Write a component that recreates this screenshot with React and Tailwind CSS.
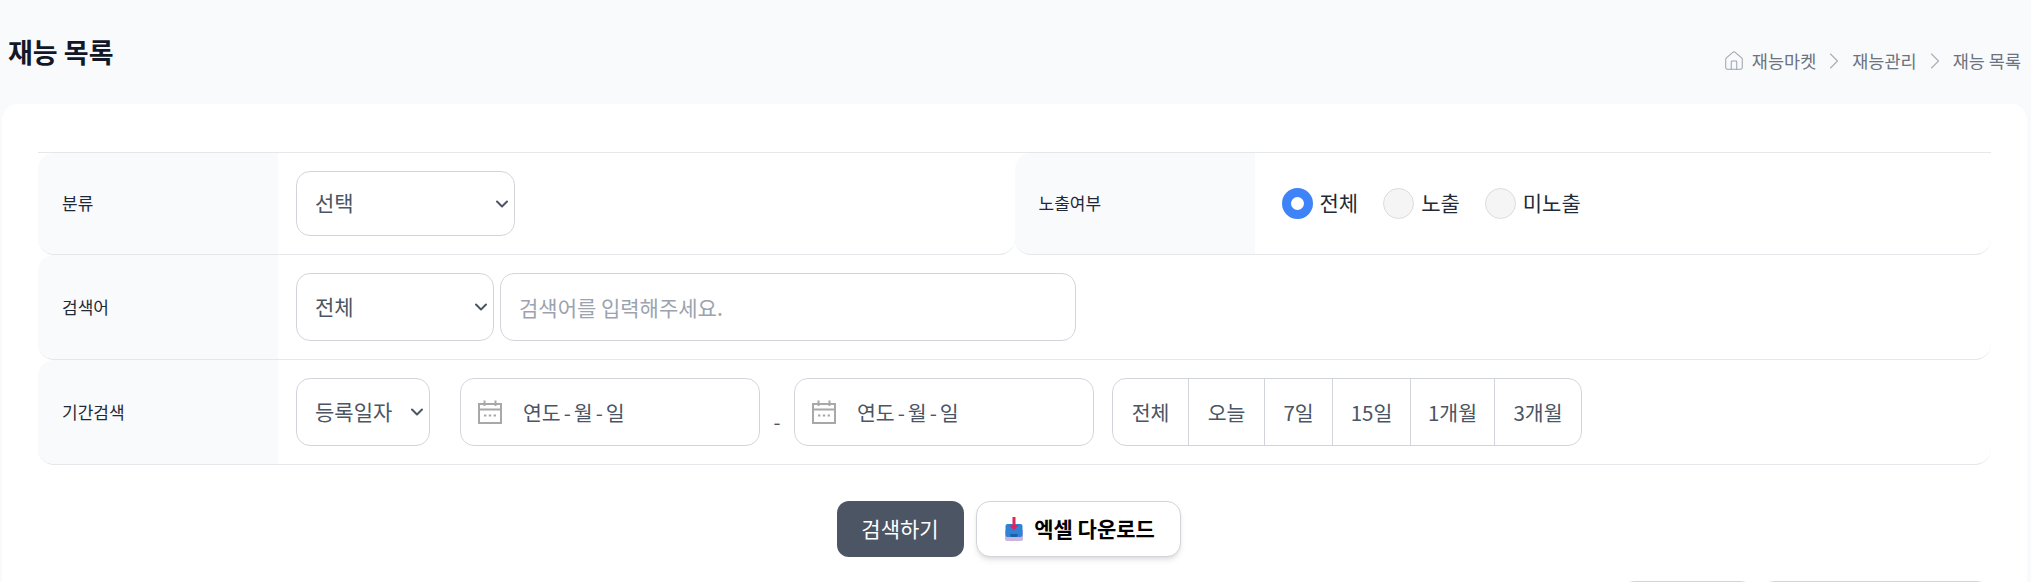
import { ChevronDown, ChevronRight, House } from 'lucide-react'

const font = { fontFamily: '"Noto Sans CJK KR", "Noto Sans", sans-serif' }

function Select({ label, className, selectClass = '' }) {
    return (
        <div className={`relative ${className}`}>
            <select
                defaultValue={label}
                className={`w-full h-full appearance-none rounded-[14px] border border-[#d1d5db] bg-white pl-[18px] pr-6 text-[21px] text-[#4b5563] outline-none ${selectClass}`}
            >
                <option>{label}</option>
            </select>
            <ChevronDown
                size={20}
                strokeWidth={2.4}
                className="absolute right-[3px] top-1/2 -translate-y-1/2 text-[#4b5563] pointer-events-none"
            />
        </div>
    )
}

function Row({ label, children, labelClass = '' }) {
    return (
        <div className="flex rounded-2xl border-b border-[#e5e7eb] overflow-hidden">
            <div className={`w-[240px] shrink-0 bg-[#f9fafb] pl-6 flex items-center text-[17px] text-[#1f2937] ${labelClass}`}>
                {label}
            </div>
            <div className="flex-1 flex items-center py-[18px] pl-[18px] min-w-0">{children}</div>
        </div>
    )
}

function Radio({ label, checked }) {
    return (
        <label className="flex items-center gap-[7px] mr-[25px] text-[21px] text-[#1f2937]">
            <span
                className={
                    checked
                        ? 'w-[31px] h-[31px] rounded-full border-[9px] border-[#3f83f8] bg-white'
                        : 'w-[31px] h-[31px] rounded-full border border-[#dcdcdc] bg-[#f5f5f5]'
                }
            ></span>
            <span className="pb-[2px]">{label}</span>
        </label>
    )
}

function CalendarIcon() {
    return (
        <svg width="24" height="24" viewBox="0 0 24 24" fill="none" stroke="#a8a8a8" strokeWidth="2">
            <rect x="1" y="4" width="22" height="19" />
            <path d="M1 9.5h22" />
            <path d="M6.5 0.5v5.5M17.5 0.5v5.5" />
            <path d="M6 15.5h2.4M10.8 15.5h2.4M15.6 15.5h2.4" strokeWidth="1.8" />
        </svg>
    )
}

function DateField() {
    return (
        <div className="w-[300px] h-[68px] rounded-[14px] border border-[#d1d5db] flex items-center pl-[17px] text-[20.5px] text-[#4b5563]">
            <CalendarIcon />
            <span className="ml-[21px]">
                연도<span className="mx-[3px]">-</span>월<span className="mx-[3px]">-</span>일
            </span>
        </div>
    )
}

function ExcelIcon() {
    return (
        <svg width="20" height="26" viewBox="0 0 20 26">
            <path d="M1 14h18v9a2 2 0 0 1-2 2H3a2 2 0 0 1-2-2z" fill="#c9b6dc" />
            <rect x="1.5" y="8" width="17" height="13" rx="2" fill="#2f83d6" />
            <path d="M6 18h8l-1 3H7z" fill="#1c5fa8" />
            <path d="M8.5 1h3v8h3.5L10 14.5 5 9h3.5z" fill="#e0245e" />
        </svg>
    )
}

const periods = [
    { label: '전체', width: 'w-[75px]' },
    { label: '오늘', width: 'w-[76px]' },
    { label: '7일', width: 'w-[68px]' },
    { label: '15일', width: 'w-[78px]' },
    { label: '1개월', width: 'w-[84px]' },
    { label: '3개월', width: 'w-[87px]' },
]
const crumbs = ['재능마켓', '재능관리', '재능 목록']

export default function App() {
    return (
        <div style={font} className="h-screen overflow-hidden bg-[#f9fafb]">
            {/* Header */}
            <div className="h-[104px] flex justify-between pl-[8px] pr-[10px]">
                <h1 className="mt-[32px] text-[27px] leading-[40px] font-bold text-[#111827]">재능 목록</h1>
                <div className="mt-[48px] h-[26px] flex items-center text-[17.5px] text-[#6b7280]">
                    <House size={22} strokeWidth={1.1} className="text-[#9ca3af] mr-[7px]" />
                    {crumbs.map((crumb, i) => (
                        <div key={crumb} className="flex items-center">
                            {i > 0 && <ChevronRight size={28} strokeWidth={1} className="mx-[4px] text-[#a9b0bc]" />}
                            <span>{crumb}</span>
                        </div>
                    ))}
                </div>
            </div>

            {/* Card */}
            <div className="ml-[2px] mr-[4px] rounded-t-2xl bg-white px-[36px] pt-[48px]">
                <div className="border-t border-[#e5e7eb]">
                    <div className="grid grid-cols-2">
                        <Row label="분류" labelClass="pb-[2px]">
                            <Select label="선택" className="w-[219px] h-[65px]" selectClass="pb-[2px]" />
                        </Row>
                        <Row label="노출여부" labelClass="pb-[2px]">
                            <div className="h-[65px] pl-[9px] flex items-center">
                                <Radio label="전체" checked />
                                <Radio label="노출" />
                                <Radio label="미노출" />
                            </div>
                        </Row>
                    </div>
                    <Row label="검색어">
                        <Select label="전체" className="w-[198px] h-[68px]" />
                        <input
                            placeholder="검색어를 입력해주세요."
                            className="ml-[6px] w-[576px] h-[68px] rounded-[14px] border border-[#d1d5db] px-[18px] text-[21px] outline-none placeholder:text-[#9ca3af]"
                        />
                    </Row>
                    <Row label="기간검색">
                        <Select label="등록일자" className="w-[134px] h-[68px]" />
                        <div className="ml-[30px]">
                            <DateField />
                        </div>
                        <span className="w-[34px] pt-[20px] text-center text-[20px] text-[#4b5563]">-</span>
                        <DateField />
                        <div className="ml-[18px] h-[68px] flex rounded-[14px] border border-[#d1d5db] text-[20.5px] text-[#4b5563]">
                            {periods.map((period, i) => (
                                <div
                                    key={period.label}
                                    className={`flex items-center justify-center ${period.width} ${i > 0 ? 'border-l border-[#d1d5db]' : ''}`}
                                >
                                    {period.label}
                                </div>
                            ))}
                        </div>
                    </Row>
                </div>

                {/* Buttons */}
                <div className="mt-[36px] flex justify-center">
                    <button className="mr-3 w-[127px] h-[56px] rounded-[12px] bg-[#4b5563] text-[21px] text-white">
                        검색하기
                    </button>
                    <button className="mr-3 w-[205px] h-[56px] rounded-[14px] border border-[#d1d5db] bg-white shadow-md flex items-center justify-center gap-[10px] pl-[3px] text-[21px] font-bold text-black">
                        <ExcelIcon />
                        엑셀 다운로드
                    </button>
                </div>

                {/* Cut off by the window */}
                <div className="mt-[24px] pr-[2px] flex justify-end gap-[9px]">
                    <div className="w-[131px] h-[50px] rounded-[12px] border border-[#d1d5db] bg-white shadow-md"></div>
                    <div className="w-[227px] h-[50px] rounded-[12px] border border-[#d1d5db] bg-white shadow-md"></div>
                </div>
            </div>
        </div>
    )
}
